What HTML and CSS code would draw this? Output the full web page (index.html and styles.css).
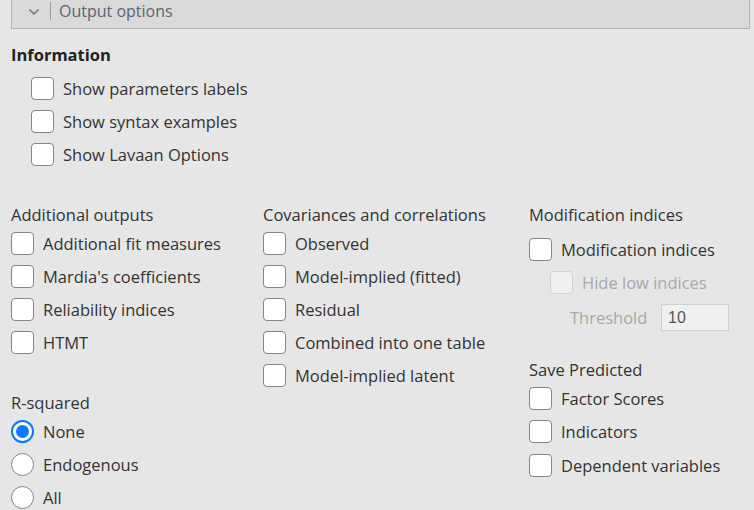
FILE: index.html
```html
<!DOCTYPE html>
<html>
<head>
<meta charset="utf-8">
<link rel="stylesheet" href="styles.css">
</head>
<body>
<div class="header">
  <svg class="chev" width="12" height="8" viewBox="0 0 12 8"><path d="M1.5 1.5 L6 6 L10.5 1.5" fill="none" stroke="#6a7080" stroke-width="1.4"/></svg>
  <span class="sep"></span>
  <span class="title">Output options</span>
</div>

<div class="info">
  <div class="heading-bold">Information</div>
  <div class="info-list">
    <label class="row"><span class="cb"></span><span>Show parameters labels</span></label>
    <label class="row"><span class="cb"></span><span>Show syntax examples</span></label>
    <label class="row"><span class="cb"></span><span>Show Lavaan Options</span></label>
  </div>
</div>

<div class="cols">
  <div class="col col1">
    <div class="heading">Additional outputs</div>
    <label class="row"><span class="cb"></span><span>Additional fit measures</span></label>
    <label class="row"><span class="cb"></span><span>Mardia's coefficients</span></label>
    <label class="row"><span class="cb"></span><span>Reliability indices</span></label>
    <label class="row"><span class="cb"></span><span>HTMT</span></label>
    <div class="heading rsq">R-squared</div>
    <label class="row"><span class="radio on"></span><span>None</span></label>
    <label class="row"><span class="radio"></span><span>Endogenous</span></label>
    <label class="row"><span class="radio"></span><span>All</span></label>
  </div>
  <div class="col col2">
    <div class="heading">Covariances and correlations</div>
    <label class="row"><span class="cb"></span><span>Observed</span></label>
    <label class="row"><span class="cb"></span><span>Model-implied (fitted)</span></label>
    <label class="row"><span class="cb"></span><span>Residual</span></label>
    <label class="row"><span class="cb"></span><span>Combined into one table</span></label>
    <label class="row"><span class="cb"></span><span>Model-implied latent</span></label>
  </div>
  <div class="col col3">
    <div class="heading">Modification indices</div>
    <label class="row mi"><span class="cb"></span><span>Modification indices</span></label>
    <label class="row sub disabled"><span class="cb"></span><span>Hide low indices</span></label>
    <div class="row thresh disabled"><span class="tlabel">Threshold</span><span class="tinput">10</span></div>
    <div class="heading save">Save Predicted</div>
    <label class="row"><span class="cb"></span><span>Factor Scores</span></label>
    <label class="row"><span class="cb"></span><span>Indicators</span></label>
    <label class="row last"><span class="cb"></span><span>Dependent variables</span></label>
  </div>
</div>
</body>
</html>
```

FILE: styles.css
```css
html, body {
  margin: 0;
  padding: 0;
  background: #e6e6e6;
  font-family: "Open Sans", "Noto Sans", sans-serif;
  font-size: 16px;
  color: #333333;
  width: 754px;
  height: 510px;
  overflow: hidden;
}

.header {
  margin-left: 11px;
  width: 739px;
  height: 29px;
  background: #d9d9d9;
  border-right: 1px solid #b3b3b3;
  border-bottom: 1px solid #b3b3b3;
  border-left: 1px solid #b3b3b3;
  box-sizing: border-box;
  display: flex;
  align-items: center;
  padding-bottom: 7px;
}

.chev {
  margin-left: 16px;
  margin-top: 2px;
}

.sep {
  width: 1px;
  height: 18px;
  background: #9a9a9a;
  margin-left: 10px;
}

.title {
  margin-left: 8px;
  color: #5d6375;
  font-size: 16px;
}

.info {
  padding-left: 11px;
  margin-top: 16px;
}

.heading-bold {
  font-weight: 700;
  font-size: 16.5px;
  line-height: 20px;
  color: #222;
}

.info-list {
  margin-top: 7px;
  padding-left: 20px;
}

.row {
  display: flex;
  align-items: center;
  height: 33px;
  gap: 9px;
  white-space: nowrap;
  font-size: 16.5px;
}

.cb {
  width: 23px;
  height: 23px;
  box-sizing: border-box;
  border: 1.5px solid #858585;
  border-radius: 4px;
  background: #ffffff;
  flex: none;
}

.radio {
  width: 23px;
  height: 23px;
  box-sizing: border-box;
  border: 1.5px solid #858585;
  border-radius: 50%;
  background: #ffffff;
  flex: none;
  position: relative;
}

.radio.on {
  border: 2px solid #0a78ff;
}

.radio.on::after {
  content: "";
  position: absolute;
  left: 3px;
  top: 3px;
  width: 13px;
  height: 13px;
  border-radius: 50%;
  background: #0a78ff;
}

.cols {
  display: grid;
  grid-template-columns: 252px 266px 1fr;
  padding-left: 11px;
  margin-top: 34px;
}

.heading {
  line-height: 20px;
  font-size: 16.5px;
  margin-bottom: 2px;
  color: #333;
}

.rsq {
  margin-top: 34px;
}

.mi {
  margin-top: 8px;
}

.sub {
  padding-left: 21px;
}

.disabled {
  color: #a8a8a8;
}

.disabled .cb {
  background: #f0f0f0;
  border-color: #d2d2d2;
}

.thresh {
  height: 34px;
  margin-top: 1px;
  padding-left: 41px;
  gap: 0;
}

.tlabel {
  width: 91px;
}

.tinput {
  width: 68px;
  height: 27px;
  box-sizing: border-box;
  border: 1px solid #cfcfcf;
  background: #f0f0f0;
  color: #555;
  font-family: "Liberation Sans", Arial, sans-serif;
  font-size: 16px;
  line-height: 25px;
  padding-left: 6px;
}

.save {
  margin-top: 26px;
}

.last {
  margin-top: 1px;
}
```
